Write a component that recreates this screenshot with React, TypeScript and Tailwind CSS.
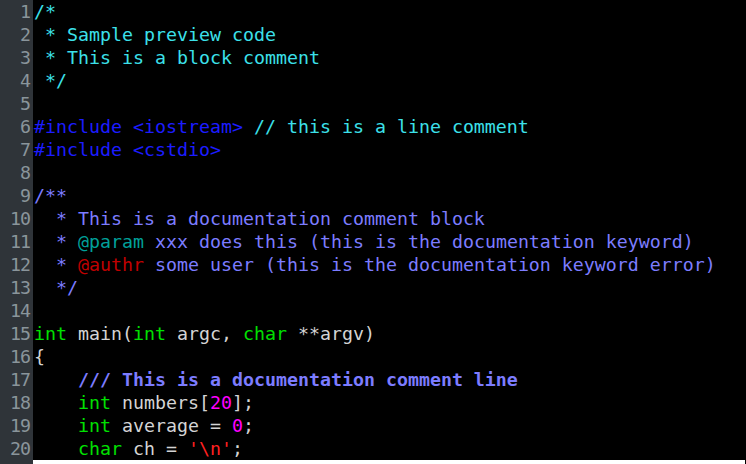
import React from "react";

type Tok = { t: string; c?: string; b?: boolean };

const CMT = "text-[#3ce0ea]";
const PRE = "text-[#1c1cff]";
const DOC = "text-[#7c7cff]";
const TAG = "text-[#00a09a]";
const ERR = "text-[#c00000]";
const KW = "text-[#00e000]";
const TXT = "text-[#d4d4d4]";
const NUM = "text-[#ff00ff]";
const STR = "text-[#ff2020]";

const lines: Tok[][] = [
  [{ t: "/*", c: CMT }],
  [{ t: " * Sample preview code", c: CMT }],
  [{ t: " * This is a block comment", c: CMT }],
  [{ t: " */", c: CMT }],
  [],
  [
    { t: "#include <iostream> ", c: PRE },
    { t: "// this is a line comment", c: CMT },
  ],
  [{ t: "#include <cstdio>", c: PRE }],
  [],
  [{ t: "/**", c: DOC }],
  [{ t: "  * This is a documentation comment block", c: DOC }],
  [
    { t: "  * ", c: DOC },
    { t: "@param", c: TAG },
    { t: " xxx does this (this is the documentation keyword)", c: DOC },
  ],
  [
    { t: "  * ", c: DOC },
    { t: "@authr", c: ERR },
    { t: " some user (this is the documentation keyword error)", c: DOC },
  ],
  [{ t: "  */", c: DOC }],
  [],
  [
    { t: "int", c: KW },
    { t: " main(", c: TXT },
    { t: "int", c: KW },
    { t: " argc, ", c: TXT },
    { t: "char", c: KW },
    { t: " **argv)", c: TXT },
  ],
  [{ t: "{", c: TXT }],
  [{ t: "    /// This is a documentation comment line", c: DOC, b: true }],
  [
    { t: "    " },
    { t: "int", c: KW },
    { t: " numbers[", c: TXT },
    { t: "20", c: NUM },
    { t: "];", c: TXT },
  ],
  [
    { t: "    " },
    { t: "int", c: KW },
    { t: " average = ", c: TXT },
    { t: "0", c: NUM },
    { t: ";", c: TXT },
  ],
  [
    { t: "    " },
    { t: "char", c: KW },
    { t: " ch = ", c: TXT },
    { t: "'\\n'", c: STR },
    { t: ";", c: TXT },
  ],
];

export default function App() {
  return (
    <div
      className="flex w-[746px] h-[464px] overflow-hidden bg-black text-[18.27px] leading-[23px]"
      style={{ fontFamily: '"DejaVu Sans Mono", "Liberation Mono", monospace' }}
    >
      <div className="w-[33px] shrink-0 bg-[#2f3439] text-[#8a959b] text-right pr-[3px]">
        {lines.map((_, i) => (
          <div key={i} className="h-[23px] tracking-[-1px]">
            {i + 1}
          </div>
        ))}
      </div>
      <div className="flex-1 flex flex-col pl-px">
        {lines.map((line, i) => (
          <div key={i} className="h-[23px] whitespace-pre">
            {line.map((tok, j) => (
              <span key={j} className={`${tok.c ?? TXT} ${tok.b ? "font-bold" : ""}`}>
                {tok.t}
              </span>
            ))}
          </div>
        ))}
        <div className="-ml-px mr-px flex-1 bg-white" />
      </div>
    </div>
  );
}
